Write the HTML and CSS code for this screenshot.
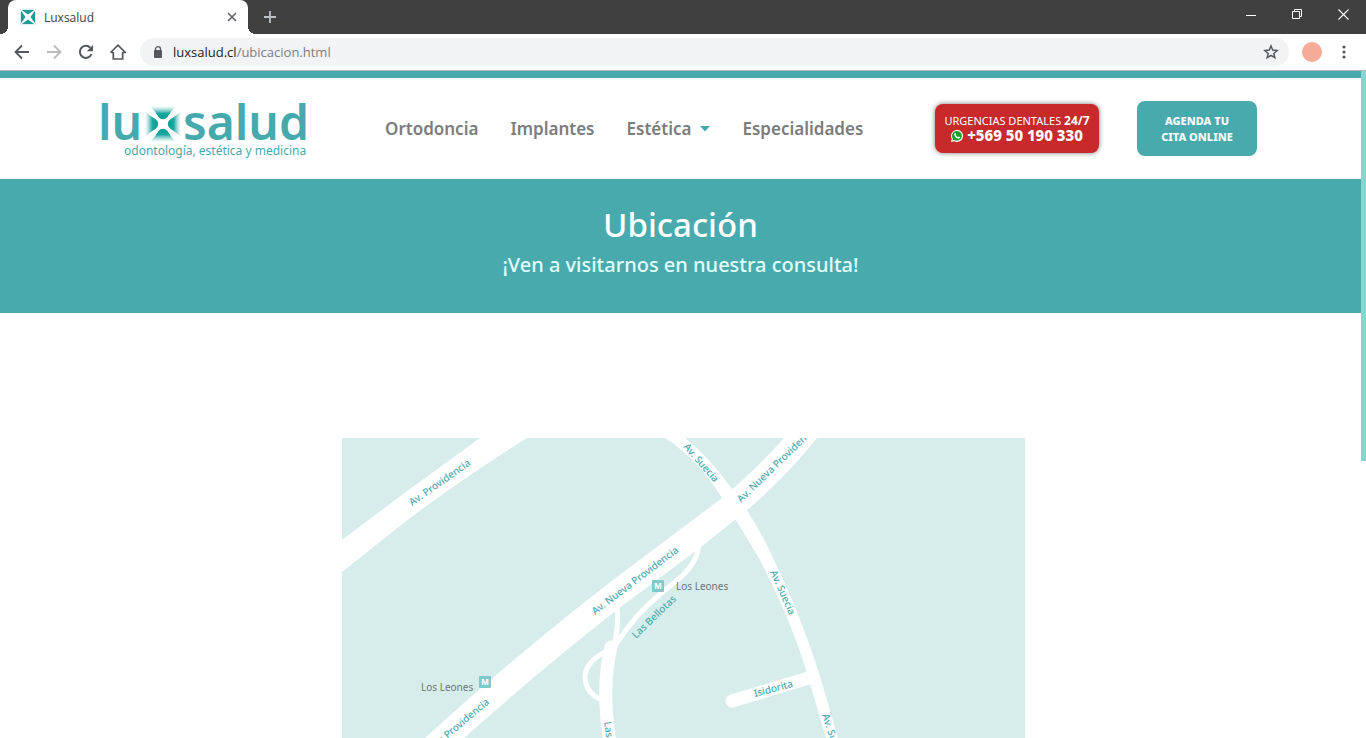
FILE: index.html
```html
<!DOCTYPE html>
<html lang="es">
<head>
<meta charset="utf-8">
<title>Luxsalud</title>
<link rel="stylesheet" href="styles.css">
</head>
<body>
<div class="browser">
  <div class="tabstrip">
    <div class="tab">
      <svg class="favicon" viewBox="0 0 16 16" aria-hidden="true">
        <rect width="16" height="16" fill="#d8f0ef"/>
        <path d="M2 1H14L10.500 5Q8 7 5.500 5ZM2 15H14L10.500 11Q8 9 5.500 11ZM1 2V14L5 10.500Q7 8 5 5.500ZM15 2V14L11 10.500Q9 8 11 5.500Z" fill="#249a99"/>
        <path d="M0 0 8 5.500 16 0 10.500 8 16 16 8 10.500 0 16 5.500 8Z" fill="#fff"/>
      </svg>
      <span class="tab-title">Luxsalud</span>
      <button class="plain tab-close" aria-label="Cerrar pestaña"><svg width="10" height="10" viewBox="0 0 10 10"><path d="M1 1 9 9M9 1 1 9" stroke="#5f6368" stroke-width="1.600"/></svg></button>
    </div>
    <button class="plain new-tab" aria-label="Nueva pestaña"><svg width="12" height="12" viewBox="0 0 12 12"><path d="M6 0V12M0 6H12" stroke="#bdc1c6" stroke-width="1.800"/></svg></button>
    <div class="window-controls">
      <button class="plain" aria-label="Minimizar"><svg width="11" height="11" viewBox="0 0 11 11"><path d="M0 6.500H10" stroke="#fff"/></svg></button>
      <button class="plain" aria-label="Restaurar"><svg width="11" height="11" viewBox="0 0 11 11"><path d="M.5 2.500H7.500V9.500H.5ZM2.500 2.500V.5H9.500V7.500H7.500" fill="none" stroke="#fff"/></svg></button>
      <button class="plain" aria-label="Cerrar"><svg width="11" height="11" viewBox="0 0 11 11"><path d="M.5.5 10.500 10.500M10.500.5.5 10.500" stroke="#fff" stroke-width="1.200"/></svg></button>
    </div>
  </div>

  <div class="toolbar">
    <button class="plain" aria-label="Atrás"><svg width="16" height="16" viewBox="0 0 16 16"><path d="M15 8H2M8 1.500 1.500 8 8 14.500" fill="none" stroke="#54585d" stroke-width="1.800"/></svg></button>
    <button class="plain" aria-label="Adelante"><svg width="16" height="16" viewBox="0 0 16 16"><path d="M1 8H14M8 1.500 14.500 8 8 14.500" fill="none" stroke="#babcbe" stroke-width="1.800"/></svg></button>
    <button class="plain" aria-label="Recargar"><svg width="16" height="16" viewBox="0 0 16 16"><path d="M13.500 10A6 6 0 1 1 12.300 3.800" fill="none" stroke="#54585d" stroke-width="2"/><path d="M15 1V7.200H8.800Z" fill="#54585d"/></svg></button>
    <button class="plain" aria-label="Inicio"><svg width="16" height="16" viewBox="0 0 16 16"><path d="M3.300 8V15H12.700V8M.6 8.500 8 1.200 15.400 8.500H12.700M.6 8.500H3.300" fill="none" stroke="#54585d" stroke-width="1.700"/></svg></button>
    <div class="address">
      <svg width="10" height="12" viewBox="0 0 10 12" aria-hidden="true"><rect x="1" y="4" width="8" height="8" rx="1" fill="#54585d"/><path d="M2.500 5V3a2.500 2.300 0 0 1 5 0V5" fill="none" stroke="#54585d" stroke-width="1.300"/></svg>
      <span class="url"><b>luxsalud.cl</b>/ubicacion.html</span>
      <button class="plain star" aria-label="Favorito"><svg width="16" height="16" viewBox="0 0 16 16"><path d="M8 2 9.700 6.100 14.200 6.500 10.800 9.400 11.800 13.700 8 11.400 4.200 13.700 5.200 9.400 1.800 6.500 6.300 6.100Z" fill="none" stroke="#54585d" stroke-width="1.500"/></svg></button>
    </div>
    <button class="avatar" aria-label="Perfil"></button>
    <button class="plain menu" aria-label="Menú"><svg width="4" height="14" viewBox="0 0 4 14"><g fill="#54585d"><circle cx="2" cy="2" r="1.600"/><circle cx="2" cy="7" r="1.600"/><circle cx="2" cy="12" r="1.600"/></g></svg></button>
  </div>

  <div class="page">
    <header class="site-header">
      <a class="logo" href="#" aria-label="Luxsalud">
        <svg width="210" height="62" viewBox="0 0 210 62">
          <defs>
            <linearGradient id="ray" x1="0" y1="1" x2="0" y2="0"><stop offset="0" stop-color="#009e93"/><stop offset=".45" stop-color="#1ba89f"/><stop offset="1" stop-color="#7cc9c6" stop-opacity="0"/></linearGradient>
            <path id="wedge" d="M49 8H75Q70 13 66.500 19 62 23.500 57.500 19 54 13 49 8Z" fill="url(#ray)"/>
          </defs>
          <text class="logo-word" x="-3" y="42">lu</text>
          <use href="#wedge"/>
          <use href="#wedge" transform="rotate(90 62 26)"/>
          <use href="#wedge" transform="rotate(180 62 26)"/>
          <use href="#wedge" transform="rotate(270 62 26)"/>
          <text class="logo-word" x="82" y="42">salud</text>
          <text class="logo-tag" x="23" y="57">odontología, estética y medicina</text>
        </svg>
      </a>
      <nav class="nav">
        <a href="#">Ortodoncia</a>
        <a href="#">Implantes</a>
        <a href="#">Estética<svg class="caret" width="10" height="6" viewBox="0 0 10 6"><path d="M0 0H10L5 5.500Z" fill="#45aaab"/></svg></a>
        <a href="#">Especialidades</a>
      </nav>
      <div class="actions">
        <a class="urgent" href="#">
          <span class="urgent-title">URGENCIAS DENTALES <b>24/7</b></span>
          <span class="urgent-phone"><svg width="12" height="12" viewBox="0 0 12 12"><path d="M0 12 .8 8.800A6 6 0 1 1 3.200 11.200Z" fill="#fff"/><path d="M1.400 10.600 1.900 8.700A4.900 4.900 0 1 1 3.400 10.100Z" fill="#18a325"/><path d="M3.700 3.200Q4.600 2.500 5 4L4.700 4.900Q5.500 6.500 7 7.100L7.900 6.500 9.200 7.300Q8.700 9.100 6.900 8.600 3.500 7.300 3.300 4.400Z" fill="#fff"/></svg>+569 50 190 330</span>
        </a>
        <a class="book" href="#">AGENDA TU<br>CITA ONLINE</a>
      </div>
    </header>

    <section class="hero">
      <h1>Ubicación</h1>
      <p>¡Ven a visitarnos en nuestra consulta!</p>
    </section>

    <main class="location">
      <svg class="map" viewBox="0 0 683 400" role="img" aria-label="Mapa de ubicación">
        <rect width="683" height="400" fill="#d7edeb"/>
        <g fill="#fff">
          <path d="M0 102 68 51 138 0H185Q126 37 68 80L0 134Z"/>
          <path d="M-20 388 83 300Q180 212 271 142L380 60Q413 33 442 0H475Q442 41 404 73L359 109 276 171Q198 232 122 300L20 388Z"/>
          <path d="M323 0H343Q368 20 390 51 416 86 432 122 459 178 477 235L496 300 522 400H508L484 300 464 232Q449 182 418 122L394 82 380 60Q355 20 323 0Z"/>
        </g>
        <g fill="none" stroke="#fff" stroke-linecap="round">
          <path d="M390 263 470 239" stroke-width="13"/>
          <path d="M269 209Q259 250 268 304L290 400" stroke-width="13"/>
          <path d="M275 168Q277 190 272 206M274 206Q294 176 316 158 328 148 339 139 358 121 356 105M263 214Q244 224 243 238 243 254 258 261" stroke-width="5"/>
        </g>
        <g class="street">
          <text transform="translate(70 68) rotate(-35)">Av. Providencia</text>
          <text transform="translate(253 177) rotate(-37)">Av. Nueva Providencia</text>
          <text transform="translate(399 65) rotate(-44)">Av. Nueva Providencia</text>
          <text transform="translate(148 265) rotate(-40)" text-anchor="end">Av. Nueva Providencia</text>
          <text transform="translate(341 9) rotate(49)">Av. Suecia</text>
          <text transform="translate(428 134) rotate(66)">Av. Suecia</text>
          <text transform="translate(480 277) rotate(72)">Av. Suecia</text>
          <text transform="translate(294 201) rotate(-44)">Las Bellotas</text>
          <text transform="translate(262 284) rotate(82)">Las Bellotas</text>
          <text transform="translate(413 259) rotate(-15)">Isidorita</text>
        </g>
        <g class="station">
          <text x="334" y="152">Los Leones</text>
          <text x="79" y="253">Los Leones</text>
        </g>
        <g fill="#7fc9cb">
          <rect x="310" y="142" width="12" height="12" rx="1"/>
          <rect x="137" y="238" width="12" height="12" rx="1"/>
        </g>
        <g class="metro">
          <text x="316" y="151">M</text>
          <text x="143" y="247">M</text>
        </g>
      </svg>
    </main>
    <div class="scroll-thumb"></div>
  </div>
</div>
</body>
</html>
```
FILE: styles.css
```css
* { box-sizing: border-box; }

body {
  margin: 0;
  font-family: "Noto Sans", "Open Sans", sans-serif;
  background: #fff;
}

a { text-decoration: none; color: inherit; }
svg { display: block; }

.plain {
  display: flex;
  align-items: center;
  justify-content: center;
  padding: 0;
  border: 0;
  background: none;
}

.browser {
  display: flex;
  flex-direction: column;
  height: 100vh;
  overflow: hidden;
}

.tabstrip {
  display: flex;
  flex: none;
  height: 34px;
  padding-left: 8px;
  background: #404040;
}

.tab {
  position: relative;
  display: flex;
  align-items: center;
  width: 240px;
  padding: 0 11px 0 12px;
  border-radius: 8px 8px 0 0;
  background: #fff;
}

/* Curved feet where the tab meets the toolbar */
.tab::before,
.tab::after {
  content: "";
  position: absolute;
  bottom: 0;
  width: 8px;
  height: 8px;
}
.tab::before { left: -8px; background: radial-gradient(circle at 0 0, #404040 8px, #fff 8px); }
.tab::after { right: -8px; background: radial-gradient(circle at 100% 0, #404040 8px, #fff 8px); }

.favicon { width: 16px; height: 16px; }
.tab-title { margin-left: 8px; font: 12px "Open Sans", sans-serif; color: #3c4043; }
.tab-close { margin-left: auto; }
.new-tab { width: 28px; margin-left: 8px; }

.window-controls { display: flex; margin-left: auto; height: 29px; }
.window-controls button { width: 46px; }

.toolbar {
  display: flex;
  flex: none;
  align-items: center;
  gap: 16px;
  height: 37px;
  padding: 0 20px 0 14px;
  border-bottom: 1px solid #b4b7b8;
}

.address {
  display: flex;
  flex: 1;
  align-items: center;
  height: 28px;
  margin-left: -2px;
  padding: 0 10px 0 13px;
  border-radius: 14px;
  background: #f1f3f4;
}
.url { margin-left: 10px; font: 13px "Open Sans", sans-serif; color: #7b7f83; }
.url b { font-weight: 400; color: #202124; }
.star { margin-left: auto; }
.avatar {
  width: 20px;
  height: 20px;
  margin-left: -3px;
  padding: 0;
  border: 0;
  border-radius: 50%;
  background: #f5ab95;
}
.menu { margin-left: 4px; }

.page {
  position: relative;
  flex: 1;
  min-height: 0;
  overflow: hidden;
}

.scroll-thumb {
  position: absolute;
  top: 0;
  right: 0;
  width: 5px;
  height: 390px;
  background: #86d6d0;
}

.site-header {
  display: flex;
  align-items: center;
  height: 108px;
  margin-right: 5px;
  padding: 0 104px 0 101px;
  border-top: 7px solid #48aaad;
}

.logo svg { overflow: visible; }
.logo-word { font-size: 48px; font-weight: 600; fill: #45aaad; }
.logo-tag { font-size: 12px; fill: #45aaad; }

.nav {
  display: flex;
  gap: 32px;
  margin-left: 74px;
  font-size: 17px;
  font-weight: 600;
  color: #7c7c7c;
}
.nav a { display: flex; align-items: center; white-space: nowrap; }
.caret { margin-left: 9px; }

.actions {
  display: flex;
  align-items: center;
  gap: 38px;
  margin-left: auto;
  color: #fff;
  text-align: center;
  white-space: nowrap;
}

.urgent {
  display: flex;
  flex-direction: column;
  justify-content: center;
  width: 164px;
  height: 49px;
  border-radius: 8px;
  background: #c8292b;
  box-shadow: 0 0 5px #777;
}
.urgent-title { font-size: 11px; line-height: 14px; }
.urgent-title b { font-size: 12px; }
.urgent-phone {
  display: flex;
  align-items: center;
  justify-content: center;
  gap: 4px;
  font-size: 15px;
  font-weight: 800;
  line-height: 15px;
}

.book {
  width: 120px;
  padding: 12px 0 11px;
  border-radius: 8px;
  background: #48aaad;
  font-size: 11px;
  font-weight: 800;
  line-height: 16px;
}

.hero {
  height: 134px;
  margin-right: 5px;
  padding-top: 22px;
  background: #48aaad;
  text-align: center;
}
.hero h1 { margin: 0; font-size: 33px; font-weight: 500; line-height: 48px; color: #fff; }
.hero p { margin: 0; font-size: 20px; font-weight: 500; line-height: 32px; color: #e0fffb; }

.location { padding-top: 125px; }
.map { width: 50%; margin: 0 auto; }
.street { font-size: 10px; font-weight: 500; fill: #4cabad; }
.station { font-size: 10px; fill: #6d7674; }
.metro { font: 700 9px "Liberation Sans", sans-serif; fill: #fff; text-anchor: middle; }
```
